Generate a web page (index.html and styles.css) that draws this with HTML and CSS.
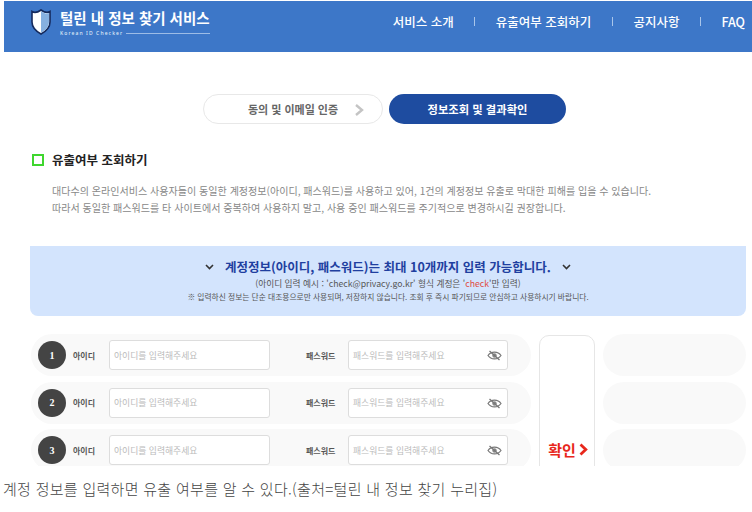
FILE: index.html
```
<!DOCTYPE html>
<html lang="ko">
<head>
<meta charset="utf-8">
<title>털린 내 정보 찾기 서비스</title>
<link rel="stylesheet" href="styles.css">
</head>
<body>
<main class="shot">
  <header class="top">
    <div class="brand">
      <svg class="shield" width="22" height="26" viewBox="0 0 22 26"><path d="M2 2.5 C4.5 4 7.5 3.5 11 1 C14.500 3.500 17.500 4 20 2.500 V13 C20 18.500 15.500 22.500 11 25 C6.500 22.500 2 18.500 2 13 Z" fill="#fff" stroke="#14295c" stroke-width="1.600"/><path d="M11 2.200 C14.500 4.500 17 5 19 4 V13 C19 18 15 21.500 11 23.800 Z" fill="#86b0e0"/></svg>
      <div class="brand-text">
        <div class="brand-name">털린 내 정보 찾기 서비스</div>
        <div class="brand-sub"><span>Korean ID Checker</span><i class="brand-line"></i></div>
      </div>
    </div>
    <nav class="nav">
      <a>서비스 소개</a><i class="sep"></i>
      <a>유출여부 조회하기</a><i class="sep"></i>
      <a>공지사항</a><i class="sep"></i>
      <a>FAQ</a>
    </nav>
  </header>

  <div class="steps">
    <div class="step step-off">동의 및 이메일 인증
      <svg class="step-arrow" width="10" height="14" viewBox="0 0 10 14"><path d="M2 2 L8 7 L2 12" fill="none" stroke="#c4c4c4" stroke-width="2.400"/></svg>
    </div>
    <div class="step step-on">정보조회 및 결과확인</div>
  </div>

  <section class="intro">
    <h2 class="intro-title"><i class="check"></i>유출여부 조회하기</h2>
    <p class="intro-text">대다수의 온라인서비스 사용자들이 동일한 계정정보(아이디, 패스워드)를 사용하고 있어, 1건의 계정정보 유출로 막대한 피해를 입을 수 있습니다.<br>따라서 동일한 패스워드를 타 사이트에서 중복하여 사용하지 말고, 사용 중인 패스워드를 주기적으로 변경하시길 권장합니다.</p>
  </section>

  <section class="banner">
    <div class="banner-title">
      <svg width="9" height="6" viewBox="0 0 9 6"><path d="M1 1 L4.500 4.500 L8 1" fill="none" stroke="#333" stroke-width="1.600"/></svg>
      <span>계정정보(아이디, 패스워드)는 최대 10개까지 입력 가능합니다.</span>
      <svg width="9" height="6" viewBox="0 0 9 6"><path d="M1 1 L4.500 4.500 L8 1" fill="none" stroke="#333" stroke-width="1.600"/></svg>
    </div>
    <div class="banner-ex">(아이디 입력 예시 : 'check@privacy.go.kr' 형식 계정은 '<em>check</em>'만 입력)</div>
    <div class="banner-note">※ 입력하신 정보는 단순 대조용으로만 사용되며, 저장하지 않습니다. 조회 후 즉시 파기되므로 안심하고 사용하시기 바랍니다.</div>
  </section>

  <section class="form">
    <div class="rows">
      <div class="row">
        <b class="num">1</b><span class="lbl lbl-id">아이디</span>
        <div class="field field-id">아이디를 입력해주세요</div>
        <span class="lbl lbl-pw">패스워드</span>
        <div class="field field-pw">패스워드를 입력해주세요
          <svg class="eye" width="15" height="11" viewBox="0 0 15 11"><path d="M1 5.500 C4 1 11 1 14 5.500 C11 10 4 10 1 5.500 Z" fill="none" stroke="#777" stroke-width="1.200"/><circle cx="7.500" cy="5.500" r="2.200" fill="#888"/><path d="M2.500 1 L12.500 10" stroke="#777" stroke-width="1.300"/></svg>
        </div>
      </div>
      <div class="row">
        <b class="num">2</b><span class="lbl lbl-id">아이디</span>
        <div class="field field-id">아이디를 입력해주세요</div>
        <span class="lbl lbl-pw">패스워드</span>
        <div class="field field-pw">패스워드를 입력해주세요
          <svg class="eye" width="15" height="11" viewBox="0 0 15 11"><path d="M1 5.500 C4 1 11 1 14 5.500 C11 10 4 10 1 5.500 Z" fill="none" stroke="#777" stroke-width="1.200"/><circle cx="7.500" cy="5.500" r="2.200" fill="#888"/><path d="M2.500 1 L12.500 10" stroke="#777" stroke-width="1.300"/></svg>
        </div>
      </div>
      <div class="row">
        <b class="num">3</b><span class="lbl lbl-id">아이디</span>
        <div class="field field-id">아이디를 입력해주세요</div>
        <span class="lbl lbl-pw">패스워드</span>
        <div class="field field-pw">패스워드를 입력해주세요
          <svg class="eye" width="15" height="11" viewBox="0 0 15 11"><path d="M1 5.500 C4 1 11 1 14 5.500 C11 10 4 10 1 5.500 Z" fill="none" stroke="#777" stroke-width="1.200"/><circle cx="7.500" cy="5.500" r="2.200" fill="#888"/><path d="M2.500 1 L12.500 10" stroke="#777" stroke-width="1.300"/></svg>
        </div>
      </div>
    </div>
    <div class="submit">확인
      <svg width="9" height="13" viewBox="0 0 9 13"><path d="M1.500 1.500 L6.800 6.500 L1.500 11.500" fill="none" stroke="#e8281c" stroke-width="2.800"/></svg>
    </div>
    <div class="results">
      <div class="result"></div>
      <div class="result"></div>
      <div class="result"></div>
    </div>
  </section>
</main>
<p class="caption">계정 정보를 입력하면 유출 여부를 알 수 있다.(출처=털린 내 정보 찾기 누리집)</p>
</body>
</html>
```
FILE: styles.css
```
* { box-sizing: border-box; }
html, body { margin: 0; padding: 0; background: #fff; }
body { width: 752px; height: 512px; overflow: hidden; font-family: "Noto Sans CJK KR", "Noto Sans", sans-serif; }
i, em { font-style: normal; }

.shot { margin: 1px 0 0 4px; width: 748px; height: 465px; overflow: hidden; background: #fff; }

.top { height: 51px; background: #3d77c8; display: flex; justify-content: space-between; padding: 0 7px 0 26px; color: #fff; }
.brand { display: flex; align-items: flex-start; padding-top: 8px; gap: 8px; }
.brand-text { width: 150px; margin-top: -1px; }
.brand-name { font-size: 14.500px; font-weight: 700; line-height: 20px; white-space: nowrap; }
.brand-sub { display: flex; align-items: center; gap: 3px; font-size: 5px; line-height: 7px; letter-spacing: 1.100px; font-weight: 500; color: #dfe9f7; font-family: "Noto Sans", sans-serif; white-space: nowrap; margin-top: 2px; }
.brand-line { flex: 1; height: 1px; background: #9dbce6; }

.nav { display: flex; align-items: center; height: 41px; font-size: 12.500px; font-weight: 500; gap: 20.500px; white-space: nowrap; }
.sep { width: 1px; height: 9px; background: #a9c5ea; }

.steps { display: flex; gap: 6px; margin: 42px 0 0 199px; }
.step { height: 30px; border-radius: 15px; display: flex; align-items: center; justify-content: center; font-size: 11px; font-weight: 700; }
.step-off { width: 180px; border: 1px solid #e8e8e8; color: #666; position: relative; }
.step-arrow { position: absolute; right: 18px; top: 8px; }
.step-on { width: 177px; background: #1e4ca0; color: #fff; font-size: 11.300px; }

.intro { margin: 0 0 0 28px; }
.intro-title { margin: 26px 0 0; display: flex; align-items: center; font-size: 12.500px; font-weight: 700; line-height: 20px; color: #222; }
.check { width: 12px; height: 12px; border: 2px solid #3fd62f; margin-right: 8px; }
.intro-text { margin: 12px 0 0 20px; font-size: 10.060px; line-height: 17px; color: #888; white-space: nowrap; }

.banner { margin: 30px 0 0 26px; width: 716px; height: 70px; border-radius: 0 0 8px 8px; background: #d3e4fd; text-align: center; padding-top: 11px; }
.banner-title { display: flex; justify-content: center; align-items: center; gap: 11px; font-size: 12.500px; line-height: 20px; font-weight: 700; color: #1f3fa0; white-space: nowrap; }
.banner-ex { font-size: 8.700px; line-height: 13px; color: #555; }
.banner-ex em { color: #e0483c; }
.banner-note { font-size: 7.750px; line-height: 14px; color: #555; white-space: nowrap; }

.form { display: flex; align-items: flex-start; margin: 18px 0 0 27px; gap: 8px; }
.rows, .results { display: flex; flex-direction: column; gap: 5.700px; }
.rows { width: 500px; }
.row { height: 42px; border-radius: 21px; background: #f9f9f9; display: flex; align-items: center; padding-left: 7px; }
.num { width: 28px; height: 28px; border-radius: 50%; background: #444; color: #fff; font-size: 10px; font-weight: 700; display: flex; align-items: center; justify-content: center; font-family: "Liberation Serif", serif; }
.lbl { font-size: 8px; font-weight: 700; color: #555; white-space: nowrap; }
.lbl-id { width: 36px; margin-left: 7px; }
.lbl-pw { width: 42px; margin-left: 36px; }
.field { height: 30px; background: #fff; border: 1px solid #ddd; border-radius: 3px; font-size: 8.800px; color: #bbb; display: flex; align-items: center; padding-left: 4px; position: relative; white-space: nowrap; }
.field-id { width: 161px; }
.field-pw { width: 160px; }
.eye { position: absolute; right: 5px; top: 9px; }

.submit { width: 56px; height: 228px; margin-top: 1px; border: 1px solid #e6e6e6; border-radius: 10px; background: #fff; display: flex; align-items: center; justify-content: center; gap: 3px; padding-left: 2px; color: #e8281c; font-size: 15px; font-weight: 700; }
.results { width: 143px; }
.result { height: 42px; border-radius: 21px; background: #f9f9f9; }

.caption { margin: 13px 0 0 3px; font-size: 15px; line-height: 20px; font-weight: 300; color: #444; white-space: nowrap; letter-spacing: .29px; }
```
